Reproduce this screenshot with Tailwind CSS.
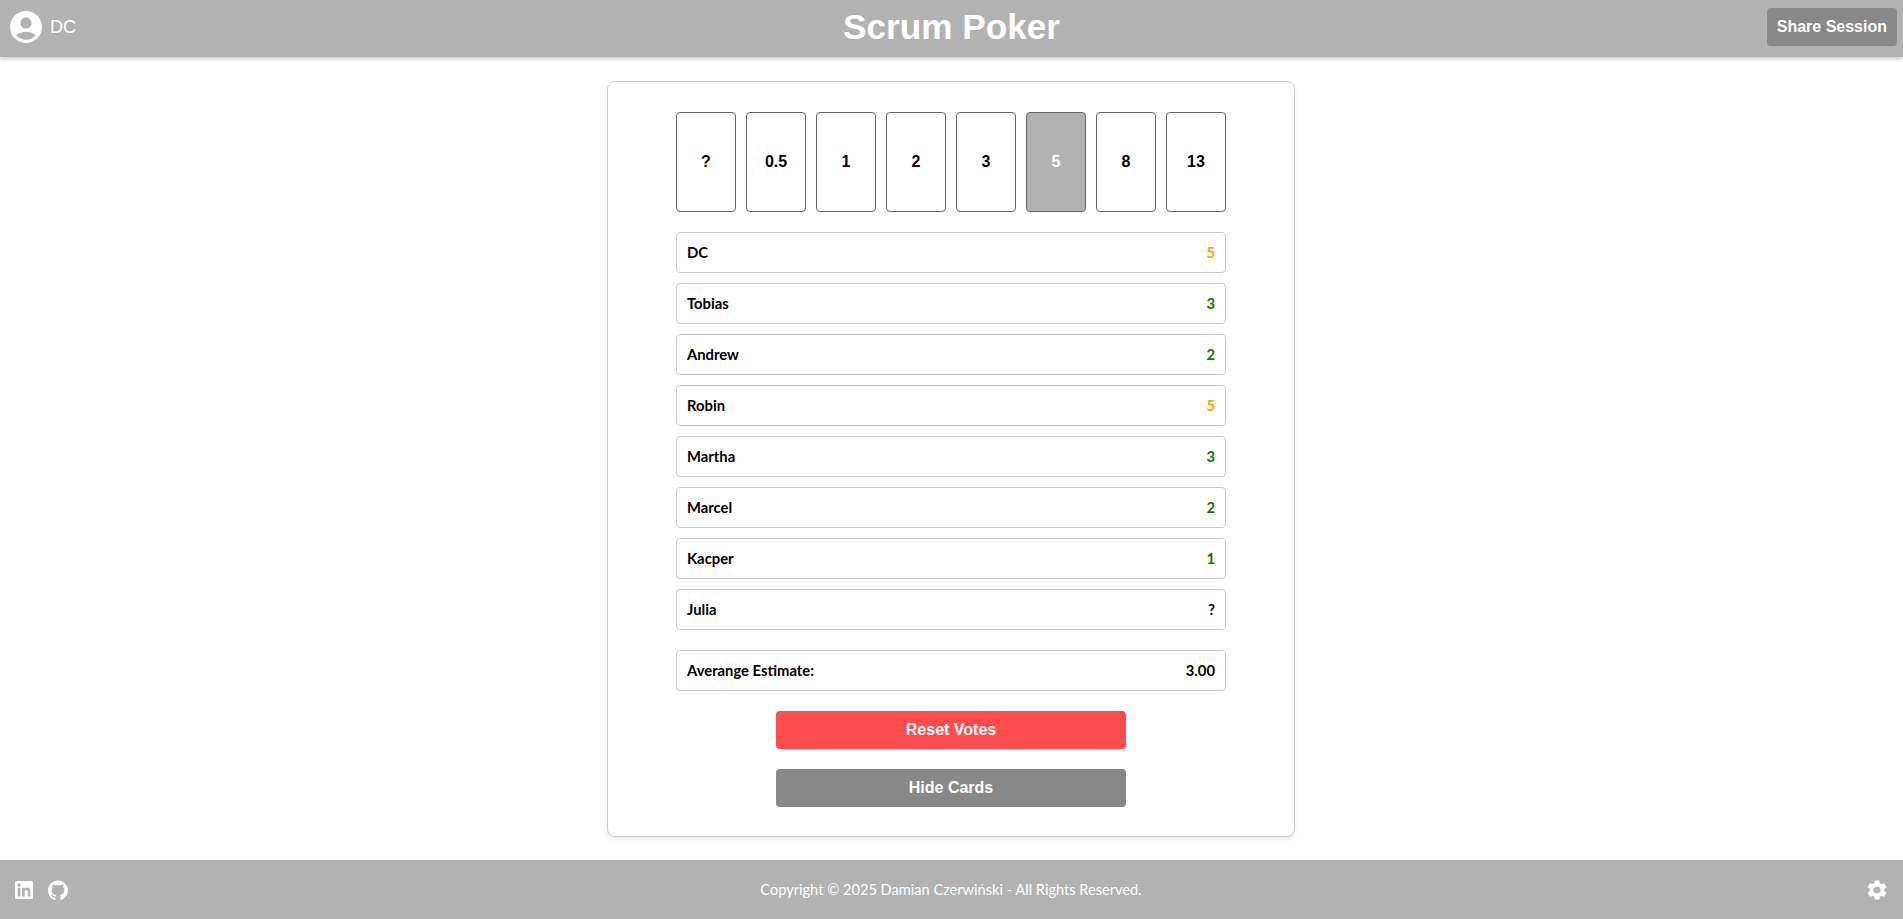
<!DOCTYPE html>
<html lang="en">
<head>
<meta charset="utf-8">
<title>Scrum Poker</title>
<script src="https://cdn.jsdelivr.net/npm/@tailwindcss/browser@4"></script>
</head>
<body class="bg-white font-['Liberation_Sans',Arial,sans-serif]">
<div class="flex flex-col h-[919px] overflow-hidden">
  <header class="relative shrink-0 h-[57px] pb-[3px] bg-[#b2b2b2] flex items-center justify-between pl-[10px] pr-[6px] shadow-[0_2px_4px_rgba(0,0,0,0.2)] z-10">
    <div class="flex items-center gap-[8px] text-white">
      <svg class="w-[32px] h-[32px]" viewBox="2 2 20 20" fill="#fff"><path d="M12 2C6.48 2 2 6.48 2 12s4.48 10 10 10 10-4.48 10-10S17.52 2 12 2zm0 4c1.93 0 3.5 1.57 3.5 3.5S13.93 13 12 13s-3.5-1.57-3.5-3.5S10.07 6 12 6zm0 14c-2.03 0-4.43-.82-6.14-2.88C7.55 15.8 9.68 15 12 15s4.45.8 6.14 2.12C16.43 19.18 14.03 20 12 20z"/></svg>
      <span class="text-[18px] leading-none">DC</span>
    </div>
    <h1 class="absolute left-0 right-0 text-center text-[35.2px] leading-none font-bold text-white pointer-events-none">Scrum Poker</h1>
    <button class="h-[38px] px-[10px] rounded-[4px] bg-[#888888] text-white text-[16px] font-bold">Share Session</button>
  </header>

  <main class="flex-1 flex justify-center pt-[24px] pr-[1px]">
    <div class="w-[688px] h-[756px] box-border bg-white border border-[#cccccc] rounded-[8px] shadow-[0_2px_4px_rgba(0,0,0,0.1)] flex flex-col items-center pt-[30px]">
      <div class="flex gap-[10px]">
        <div class="w-[60px] h-[100px] border border-[#666666] rounded-[4px] flex items-center justify-center text-[16px] font-bold text-black">?</div>
        <div class="w-[60px] h-[100px] border border-[#666666] rounded-[4px] flex items-center justify-center text-[16px] font-bold text-black">0.5</div>
        <div class="w-[60px] h-[100px] border border-[#666666] rounded-[4px] flex items-center justify-center text-[16px] font-bold text-black">1</div>
        <div class="w-[60px] h-[100px] border border-[#666666] rounded-[4px] flex items-center justify-center text-[16px] font-bold text-black">2</div>
        <div class="w-[60px] h-[100px] border border-[#666666] rounded-[4px] flex items-center justify-center text-[16px] font-bold text-black">3</div>
        <div class="w-[60px] h-[100px] border border-[#666666] rounded-[4px] flex items-center justify-center text-[16px] font-bold text-white bg-[#b2b2b2]">5</div>
        <div class="w-[60px] h-[100px] border border-[#666666] rounded-[4px] flex items-center justify-center text-[16px] font-bold text-black">8</div>
        <div class="w-[60px] h-[100px] border border-[#666666] rounded-[4px] flex items-center justify-center text-[16px] font-bold text-black">13</div>
      </div>

      <div class="w-[550px] mt-[20px] flex flex-col gap-[10px] font-['Lato',sans-serif] text-[14.8px] font-bold text-black">
        <div class="h-[41px] border border-[#cccccc] rounded-[4px] flex items-center justify-between px-[10px]"><span>DC</span><span class="text-[#ffa500]">5</span></div>
        <div class="h-[41px] border border-[#cccccc] rounded-[4px] flex items-center justify-between px-[10px]"><span>Tobias</span><span class="text-[#008000]">3</span></div>
        <div class="h-[41px] border border-[#cccccc] rounded-[4px] flex items-center justify-between px-[10px]"><span>Andrew</span><span class="text-[#008000]">2</span></div>
        <div class="h-[41px] border border-[#cccccc] rounded-[4px] flex items-center justify-between px-[10px]"><span>Robin</span><span class="text-[#ffa500]">5</span></div>
        <div class="h-[41px] border border-[#cccccc] rounded-[4px] flex items-center justify-between px-[10px]"><span>Martha</span><span class="text-[#008000]">3</span></div>
        <div class="h-[41px] border border-[#cccccc] rounded-[4px] flex items-center justify-between px-[10px]"><span>Marcel</span><span class="text-[#008000]">2</span></div>
        <div class="h-[41px] border border-[#cccccc] rounded-[4px] flex items-center justify-between px-[10px]"><span>Kacper</span><span class="text-[#008000]">1</span></div>
        <div class="h-[41px] border border-[#cccccc] rounded-[4px] flex items-center justify-between px-[10px]"><span>Julia</span><span>?</span></div>
        <div class="h-[41px] mt-[10px] border border-[#cccccc] rounded-[4px] flex items-center justify-between px-[10px]"><span>Averange Estimate:</span><span>3.00</span></div>
      </div>

      <button class="w-[350px] h-[38px] mt-[20px] rounded-[4px] bg-[#ff4d4d] text-white text-[16px] font-bold">Reset Votes</button>
      <button class="w-[350px] h-[38px] mt-[20px] rounded-[4px] bg-[#888888] text-white text-[16px] font-bold">Hide Cards</button>
    </div>
  </main>

  <footer class="relative shrink-0 h-[59px] bg-[#b2b2b2] flex items-center justify-between pl-[15px] pr-[14px]">
    <div class="flex items-center gap-[15px]">
      <svg class="w-[18px] h-[18px]" viewBox="0 0 24 24" fill="#fff"><path d="M22.2 0H1.8C.8 0 0 .8 0 1.8v20.4C0 23.2.8 24 1.8 24h20.4c1 0 1.8-.8 1.8-1.8V1.8C24 .8 23.2 0 22.2 0zM7.1 20.5H3.6V9h3.5v11.5zM5.3 7.4c-1.1 0-2.1-.9-2.1-2.1s.9-2 2.1-2 2.1.9 2.1 2-1 2.1-2.1 2.1zm15.2 13.1H17v-5.6c0-1.3 0-3-1.9-3s-2.1 1.4-2.1 2.9v5.7H9.4V9h3.4v1.6c.5-.9 1.6-1.9 3.4-1.9 3.6 0 4.3 2.4 4.3 5.5v6.3z"/></svg>
      <svg class="w-[20px] h-[20px]" viewBox="0 0 24 24" fill="#fff"><path d="M12 .5C5.4.5 0 5.9 0 12.5c0 5.3 3.4 9.8 8.2 11.4.6.1.8-.3.8-.6v-2c-3.3.7-4-1.6-4-1.6-.5-1.4-1.3-1.8-1.3-1.8-1.1-.7.1-.7.1-.7 1.2.1 1.8 1.2 1.8 1.2 1.1 1.8 2.8 1.3 3.5 1 .1-.8.4-1.3.8-1.6-2.7-.3-5.5-1.3-5.5-5.9 0-1.3.5-2.4 1.2-3.2-.1-.3-.5-1.5.1-3.2 0 0 1-.3 3.3 1.2 1-.3 2-.4 3-.4s2 .1 3 .4c2.3-1.6 3.3-1.2 3.3-1.2.7 1.7.2 2.9.1 3.2.8.8 1.2 1.9 1.2 3.2 0 4.6-2.8 5.6-5.5 5.9.4.4.8 1.1.8 2.2v3.3c0 .3.2.7.8.6 4.8-1.6 8.2-6.1 8.2-11.4C24 5.9 18.6.5 12 .5z"/></svg>
    </div>
    <p class="absolute left-0 right-0 pr-[1px] text-center font-['Lato',sans-serif] text-[14.6px] text-white pointer-events-none">Copyright © 2025 Damian Czerwiński - All Rights Reserved.</p>
    <svg class="w-[24px] h-[24px]" viewBox="0 0 24 24" fill="#fff"><path d="M19.14 12.94c.04-.3.06-.61.06-.94 0-.32-.02-.64-.07-.94l2.03-1.58c.18-.14.23-.41.12-.61l-1.92-3.32c-.12-.22-.37-.29-.59-.22l-2.39.96c-.5-.38-1.03-.7-1.62-.94l-.36-2.54c-.04-.24-.24-.41-.48-.41h-3.84c-.24 0-.43.17-.47.41l-.36 2.54c-.59.24-1.13.57-1.62.94l-2.39-.96c-.22-.08-.47 0-.59.22L2.74 8.87c-.12.21-.08.47.12.61l2.03 1.58c-.05.3-.09.63-.09.94s.02.64.07.94l-2.03 1.58c-.18.14-.23.41-.12.61l1.92 3.32c.12.22.37.29.59.22l2.39-.96c.5.38 1.03.7 1.62.94l.36 2.54c.05.24.24.41.48.41h3.84c.24 0 .44-.17.47-.41l.36-2.54c.59-.24 1.13-.56 1.62-.94l2.39.96c.22.08.47 0 .59-.22l1.92-3.32c.12-.22.07-.47-.12-.61l-2.01-1.58zM12 15.6c-1.98 0-3.6-1.62-3.6-3.6s1.62-3.6 3.6-3.6 3.6 1.62 3.6 3.6-1.62 3.6-3.6 3.6z"/></svg>
  </footer>
</div>
</body>
</html>
